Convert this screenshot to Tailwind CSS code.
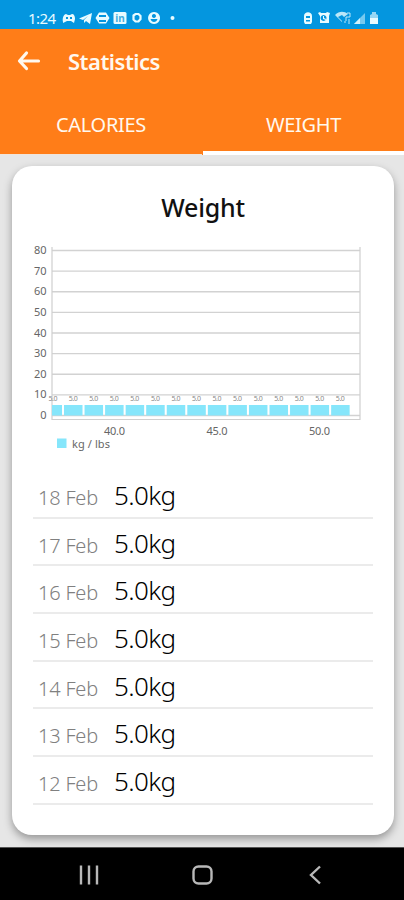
<!DOCTYPE html>
<html lang="en">
<head>
  <meta charset="UTF-8" />
  <meta name="viewport" content="width=device-width, initial-scale=1.0" />
  <title>Statistics</title>
  <script src="https://cdn.jsdelivr.net/npm/@tailwindcss/browser@4"></script>
</head>
<body class="w-[404px] h-[900px] overflow-hidden flex flex-col bg-[#e6e6e6] font-['Noto_Sans',sans-serif]">

<!-- Status bar -->
<div class="h-[29px] shrink-0 bg-[#0496df] text-[#e8fbff] flex items-end justify-between pl-7 pr-6 pb-[3px]">
  <div class="flex items-center">
    <span class="w-[34px] text-[15px] leading-4 tracking-[-0.6px]">1:24</span>
    <svg class="w-[116px] h-4" viewBox="0 0 116 16" fill="currentColor">
      <path fill-rule="evenodd" d="M1 12C0 8 2 4 4 4l2 1h2l2-1c2 0 3 2 3 5l-1 4-3-2H5l-4 2zM4 7v2h2V7zm4 0v2h2V7z" />
      <path d="M17 8.500L30 3l-2 11-4-3-2 2v-3l4-4-5 4z" />
      <path fill-rule="evenodd" d="M37 2.500h7l3.500 5.500-3.500 5.500h-7L33.500 8zM37 5v2h7V5zm0 5v2h7v-2z" />
      <rect x="51.500" y="2" width="13" height="12" rx="1.500" />
      <text x="58" y="12" text-anchor="middle" font-size="10" font-weight="700" fill="#43aee0">in</text>
      <path fill="none" stroke="currentColor" stroke-width="2.200" d="M71.500 5.500l2-1.500h3l2 2v3l-2 2.500h-3l-2-2z" />
      <path fill-rule="evenodd" d="M92 2a6 6 0 1 0 .1 0zM92 4a2 2 0 1 1-.1 0zM88.500 9h7c-.5 2-2 3-3.500 3s-3-1-3.500-3z" />
      <circle cx="110.500" cy="8" r="2" />
    </svg>
  </div>
  <svg class="w-[76px] h-4" viewBox="0 0 76 16" fill="currentColor">
    <path fill-rule="evenodd" d="M0 6c0-5 8-5 8 0v6l-1 2H1l-1-2zm2 0v2h4V6zm0 4v1.500h4V10z" />
    <path fill-rule="evenodd" d="M14 3l2-1 1 1h5l1-1 3 1-1 3v7h-9V6zM19.500 5a3 3 0 1 0 .1 0z" />
    <path d="M19 6h1v2l2 1v1l-3-1z" />
    <path opacity=".8" d="M31 5c4-4 9-4 13-1l-4 3-2-2-4 2 4 4v1z" />
    <path fill="none" stroke="currentColor" d="M43 3h3v4h-4v4M45 9v5M41 11v2" opacity=".8" />
    <path opacity=".5" d="M50 14L61 3v11z" />
    <path opacity=".8" d="M50 14l6-6v6z" />
    <path d="M66 5l2-1V2h4v2l2 1v9h-8z" opacity=".65" />
    <path d="M66 8h8v6h-8z" />
  </svg>
</div>

<!-- App bar and tabs -->
<header class="h-[126px] shrink-0 text-[#fff8ee] flex flex-col bg-[#ff7d18]">
  <div class="h-[64px] flex items-center pl-[17px]">
    <svg class="w-6 h-6" viewBox="0 0 24 24" fill="none" stroke="currentColor" stroke-width="3.200" stroke-linecap="round" stroke-linejoin="round">
      <path d="M9.500 4L2.500 12l7 7.500M3 12h18.500" />
    </svg>
    <h1 class="ml-[27px] text-[22px] font-semibold leading-none tracking-[-0.5px]">Statistics</h1>
  </div>
  <div class="flex-1 grid grid-cols-2 text-center text-[20px] leading-[63px] tracking-[-0.3px]">
    <div class="h-[62px] border-b border-[#f0e4da]">CALORIES</div>
    <div class="ml-px h-[62px] border-b-[4px] border-white">WEIGHT</div>
  </div>
</header>

<main class="flex-1 pt-[11px] pl-3 pr-[10px]">
  <section class="h-[669px] bg-white rounded-[20px] shadow-[0_4px_9px_rgba(0,0,0,0.35)] overflow-hidden">
    <h2 class="pt-[25px] text-center text-[25px] leading-8 font-medium text-[#111] tracking-[-0.2px]">Weight</h2>

    <svg class="block mt-[13px] w-[382px] h-[220px]" viewBox="12 236 382 220">
      <g id="grid" stroke="#d2d2d2" stroke-width="1.300"></g>
      <path d="M52 247V419.500H360V247" fill="none" stroke="#cfcfcf" stroke-width="1.200" />
      <g id="bars" fill="#86e6fb"></g>
      <g id="values" fill="#888" font-size="7" text-anchor="middle"></g>
      <g id="scale" fill="#666" font-size="11" text-anchor="end"></g>
      <g fill="#666" font-size="11" text-anchor="middle">
        <text x="114.500" y="435" textLength="21">40.0</text>
        <text x="217" y="435" textLength="21">45.0</text>
        <text x="319.500" y="435" textLength="21">50.0</text>
      </g>
      <rect x="57" y="438.500" width="9.500" height="9.500" fill="#86e6fb" />
      <text x="72" y="447.500" fill="#666" font-size="11" textLength="38">kg / lbs</text>
    </svg>

    <ul id="entries" class="ml-[21px] w-[340px] mt-[15px]"></ul>
  </section>
</main>

<!-- System navigation -->
<nav class="h-[53px] shrink-0 bg-black border-t border-[#555]">
  <svg class="block w-[404px] h-[52px]" viewBox="0 848 404 52" fill="none" stroke="#b8b8b8" stroke-width="2.400">
    <path d="M81 865.500v19M89 865.500v19M97 865.500v19" />
    <rect x="193.500" y="866.500" width="18" height="17" rx="5" />
    <path d="M320 866.500l-9 8.500 9 8.500" />
  </svg>
</nav>

<script>
  // Horizontal lines and their labels, 80 down to 0
  let grid = '', scale = '';
  for (let v = 80; v >= 0; v -= 10) {
    const y = 415.5 - v * 2.0625;
    grid += `<line x1="52" x2="360" y1="${y}" y2="${y}" />`;
    scale += `<text x="46.5" y="${y + 3.5}" ${v ? 'textLength="12.5"' : ''}>${v}</text>`;
  }
  document.getElementById('grid').innerHTML = grid;
  document.getElementById('scale').innerHTML = scale;

  // The first bar is cut off by the left axis
  let bars = '<rect x="52" y="405" width="10" height="10.5" />';
  let values = '<text x="53" y="401" textLength="9">5.0</text>';
  for (let i = 0; i < 14; i++) {
    const x = 64 + i * 20.55;
    bars += `<rect x="${x}" y="405" width="18.5" height="10.5" />`;
    values += `<text x="${x + 9.2}" y="401" textLength="9">5.0</text>`;
  }
  document.getElementById('bars').innerHTML = bars;
  document.getElementById('values').innerHTML = values;

  document.getElementById('entries').innerHTML = [18, 17, 16, 15, 14, 13, 12].map(day => `
    <li class="h-[47.700px] border-b-2 border-[#ebebeb] flex items-baseline pl-[5px] pt-[8px]">
      <span class="w-[76px] text-[20px] font-light text-[#808080] tracking-[-0.2px]">${day} Feb</span>
      <span class="text-[26px] leading-8 font-light text-black tracking-[-0.6px]">5.0kg</span>
    </li>`).join('');
</script>

</body>
</html>
